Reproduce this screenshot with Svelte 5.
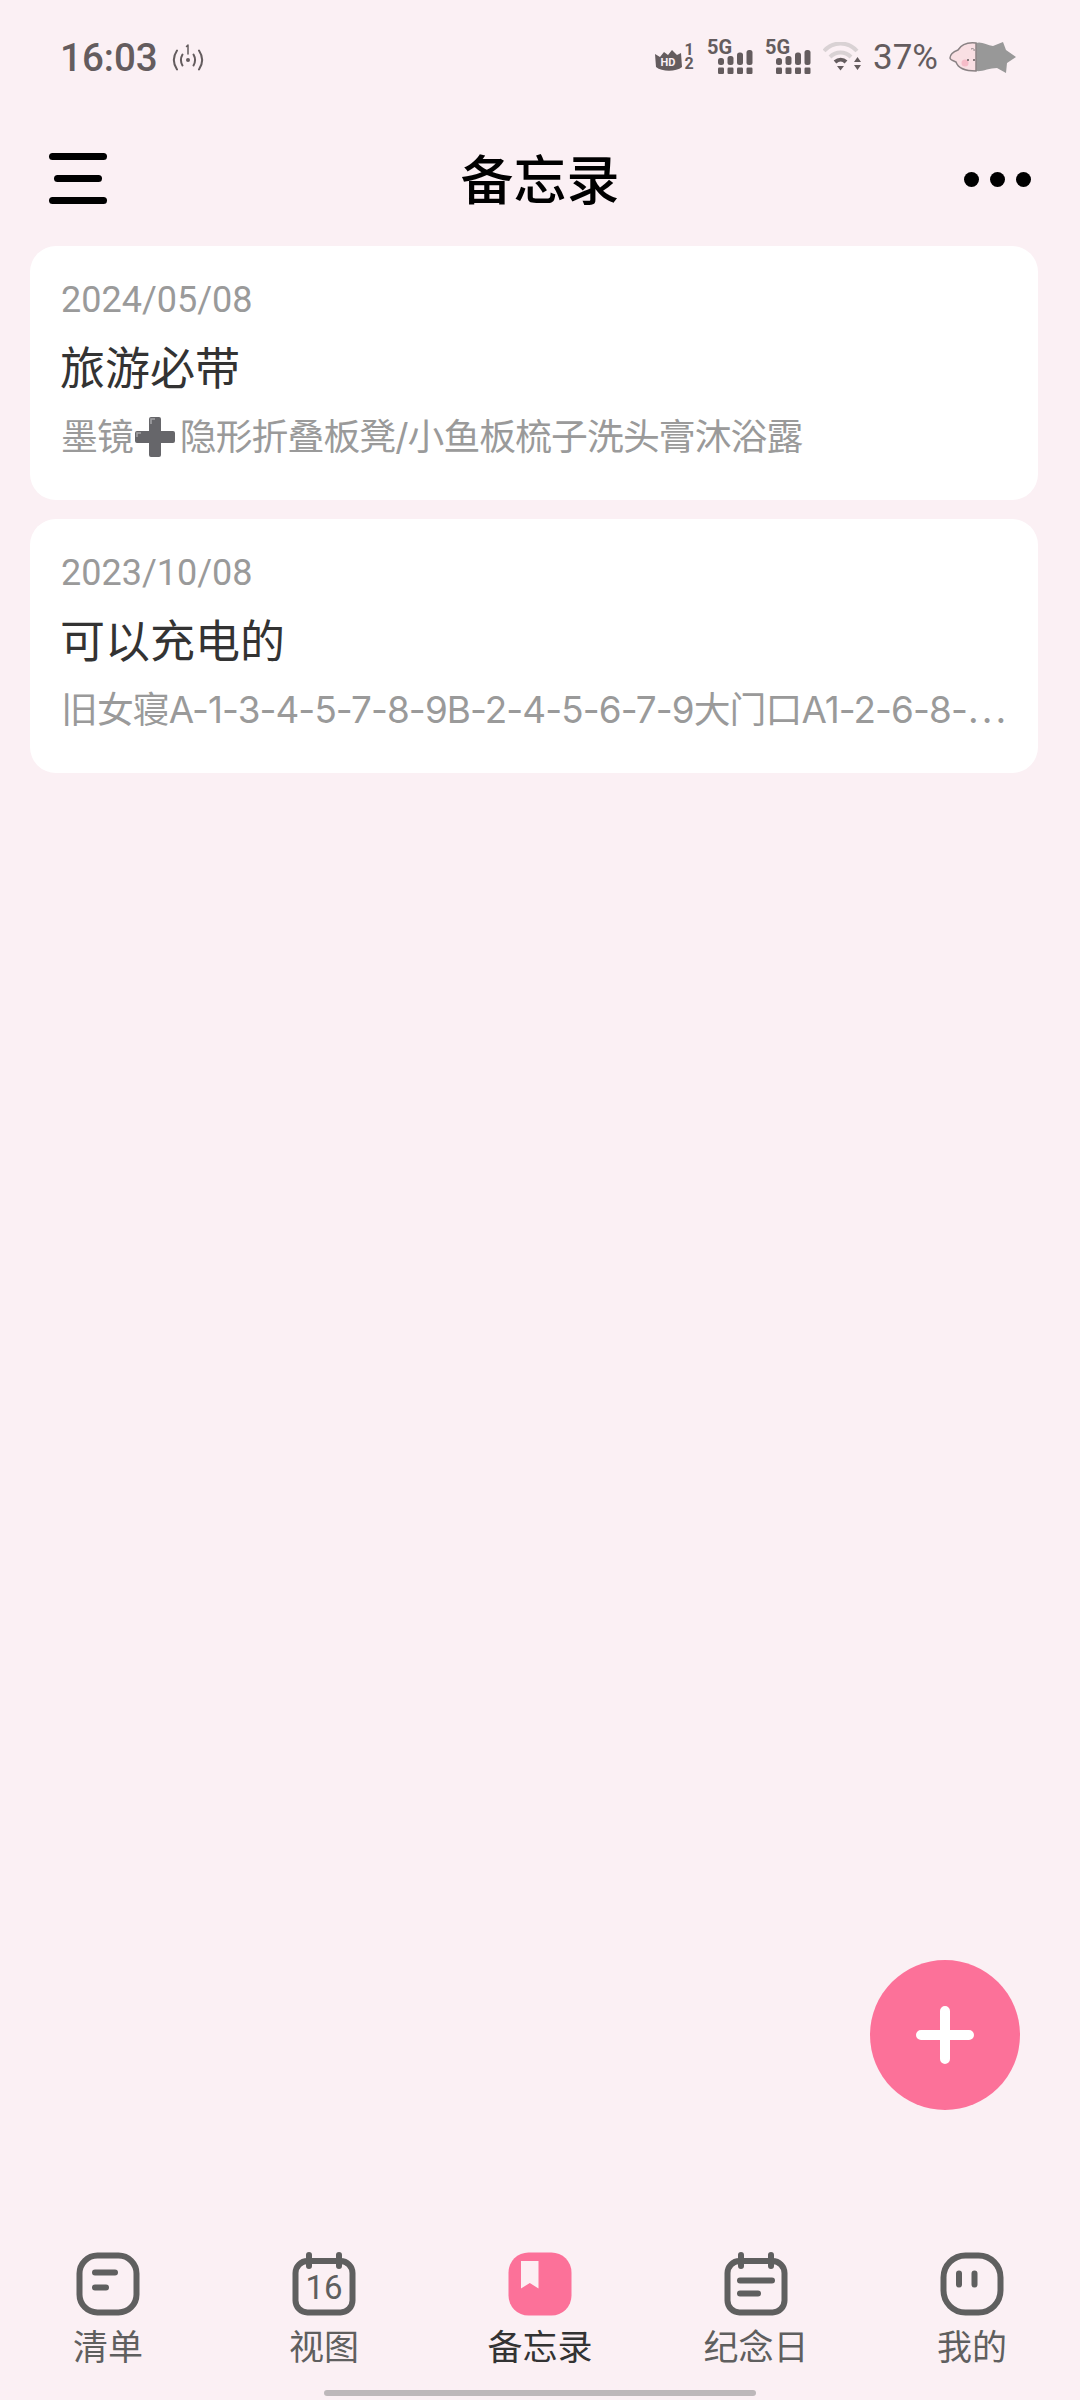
<script>
  const notes = [
    { date: '2024/05/08', title: '旅游必带', before: '墨镜', after: '隐形折叠板凳/小鱼板梳子洗头膏沐浴露' },
    { date: '2023/10/08', title: '可以充电的', before: '旧女寝A-1-3-4-5-7-8-9B-2-4-5-6-7-9大门口A1-2-6-8-⋯' }
  ];

  const tabs = [
    { key: 'list', label: '清单' },
    { key: 'view', label: '视图' },
    { key: 'memo', label: '备忘录', active: true },
    { key: 'days', label: '纪念日' },
    { key: 'mine', label: '我的' }
  ];

  const signalBars = [
    { x: 0, top: 8 },
    { x: 9.5, top: 6 },
    { x: 19, top: 2.5 },
    { x: 28.5, top: 0 }
  ];
</script>

{#snippet signal()}
  <svg class="sig" width="46" height="50" viewBox="0 -8 46 50">
    <text class="five-g" x="0" y="14">5G</text>
    <g transform="translate(11 10)">
      {#each signalBars as bar}
        <rect x={bar.x} y={bar.top} width="6" height={15 - bar.top} rx="2.500" />
        <rect x={bar.x} y="17.500" width="6" height="6.500" rx="1.200" />
      {/each}
    </g>
  </svg>
{/snippet}

<div class="page">
  <header class="status">
    <div class="status-left">
      <span class="time">16:03</span>
      <svg width="32" height="28" viewBox="0 0 32 28" fill="none" stroke="#645c5e" stroke-width="2" stroke-linecap="round">
        <circle cx="16" cy="17" r="2" fill="#645c5e" stroke="none" />
        <path d="M16 2l-1.500 1.500M16 2v9" stroke-width="1.500" />
        <path d="M10.500 11.500c-2 3.500-2 7.500 0 11" />
        <path d="M21.500 11.500c2 3.500 2 7.500 0 11" />
        <path d="M5 7.500c-4 6-4 13 0 19" />
        <path d="M27 7.500c4 6 4 13 0 19" />
      </svg>
    </div>
    <div class="status-right">
      <svg width="40" height="44" viewBox="0 -8 40 44">
        <path class="ink" d="M0 11l5 3 4-5 4 3 4-5 5 5 4-2 1 14c-6 5-20 5-26 0z" />
        <text class="hd" x="13" y="23">HD</text>
        <text class="sim" x="34" y="12">1</text>
        <text class="sim" x="34" y="26">2</text>
      </svg>
      {@render signal()}
      {@render signal()}
      <svg width="38" height="30" viewBox="0 0 38 30" fill="none" stroke-width="4">
        <path d="M1 9C10-1 25-1 34 9" stroke="#d9d2d4" />
        <path d="M7 15c6-6 15-6 21 0" stroke="#d9d2d4" />
        <path d="M12 20c3.500-3 8-3 11 0" stroke="#645c5e" />
        <path class="ink" d="M14 24h7l-3.500 4.500zM34.500 15l3.500 5h-7zM31 23h7l-3.500 5z" />
      </svg>
      <span class="battery">37%</span>
      <svg width="68" height="31" viewBox="0 0 68 31">
        <path d="M27 1C32-1 38 3 44 4L54 0l3 8 10 7-9 6-1 10-9-5c-8 0-15 4-21 3z" fill="#989898" />
        <path d="M27 1C18 0 12 3 9 8 4 10 1 13 1 16c0 2 4 3 6 4 2 6 9 9 20 9z" fill="#f9dfe3" stroke="#8a8284" stroke-width="1.500" />
        <circle cx="16" cy="21" r="3.500" fill="#f6bcc8" />
        <circle cx="19" cy="18" r="1" fill="#645c5e" />
        <circle cx="25" cy="18" r="1" fill="#645c5e" />
        <path d="M22 7c2-1 4 0 3 2" fill="none" stroke="#8a8284" />
      </svg>
    </div>
  </header>

  <div class="toolbar">
    <div class="menu">
      <span></span>
      <span class="short"></span>
      <span></span>
    </div>
    <h1>备忘录</h1>
    <div class="more">
      <span></span><span></span><span></span>
    </div>
  </div>

  <main class="notes">
    {#each notes as note}
      <article class="card">
        <div class="date">{note.date}</div>
        <div class="title">{note.title}</div>
        <div class="preview">
          {note.before}{#if note.after}<svg class="plus-emoji" width="40" height="42" viewBox="0 0 40 42">
              <path d="M14 3a2 2 0 0 1 2-2h8a2 2 0 0 1 2 2v12h12a2 2 0 0 1 2 2v8a2 2 0 0 1-2 2H26v12a2 2 0 0 1-2 2h-8a2 2 0 0 1-2-2V27H2a2 2 0 0 1-2-2v-8a2 2 0 0 1 2-2h12z" fill="#66666a" />
              <path d="M16 8V3h4M2 21v-4h4" fill="none" stroke="#a5a5a8" stroke-width="1.500" />
            </svg>{note.after}{/if}
        </div>
      </article>
    {/each}
  </main>

  <button class="fab" aria-label="新建">
    <svg width="58" height="58" viewBox="0 0 58 58" stroke="#fff" stroke-width="10" stroke-linecap="round">
      <path d="M29 5v48M5 29h48" />
    </svg>
  </button>

  <nav class="tabs">
    {#each tabs as tab}
      <div class="tab" class:active={tab.active}>
        <svg width="64" height="64" viewBox="0 0 64 64" fill="none" stroke="#5f5f5f" stroke-width="6" stroke-linecap="round">
          {#if tab.key === 'list'}
            <rect x="3.500" y="3.500" width="57" height="57" rx="18" />
            <path d="M19 20.500h20M19 35.500h11" />
          {:else if tab.key === 'view'}
            <rect x="3.500" y="9" width="57" height="51.500" rx="12" />
            <path d="M17 3v11M47 3v11" />
            <text class="day" x="32" y="47">16</text>
          {:else if tab.key === 'memo'}
            <rect x="0.500" y="0.500" width="63" height="63" rx="20" fill="#fc7199" stroke="none" />
            <path d="M13 9h17.500v27.500l-8.700-5.500-8.800 5.500z" fill="#fdeef3" stroke="none" />
          {:else if tab.key === 'days'}
            <rect x="3.500" y="9" width="57" height="51.500" rx="12" />
            <path d="M17 3v11M47 3v11M16 28.500h32M16 41.500h18" />
          {:else}
            <rect x="3.500" y="3.500" width="57" height="57" rx="22" />
            <path d="M19 21.500v11M34.500 21.500v11" />
          {/if}
        </svg>
        <span>{tab.label}</span>
      </div>
    {/each}
  </nav>
  <div class="home-bar"></div>
</div>

<style>
  :global(body) {
    margin: 0;
    background: #fbf0f4;
  }

  .page {
    position: relative;
    display: flex;
    flex-direction: column;
    height: 2400px;
    background: #fbf0f4;
    font-family: Roboto, 'Noto Sans CJK SC', sans-serif;
    overflow: hidden;
  }

  .status {
    display: flex;
    align-items: center;
    justify-content: space-between;
    height: 114px;
    padding: 0 63px 0 60px;
    box-sizing: border-box;
    color: #645c5e;
  }

  .status-left,
  .status-right {
    display: flex;
    align-items: center;
  }

  .status-left {
    gap: 14px;
  }

  .status-right {
    gap: 12px;
  }

  .time {
    font-size: 38.5px;
    font-weight: 500;
  }

  .battery {
    font-size: 35px;
    width: 64px;
  }

  .five-g {
    font-size: 20px;
    font-weight: 700;
    fill: #645c5e;
  }

  .sig rect,
  .ink {
    fill: #645c5e;
  }

  .hd {
    font-size: 11px;
    font-weight: 700;
    fill: #fbf0f4;
    text-anchor: middle;
  }

  .sim {
    font-size: 16px;
    font-weight: 700;
    fill: #645c5e;
    text-anchor: middle;
  }

  .toolbar {
    display: grid;
    grid-template-columns: 1fr auto 1fr;
    align-items: center;
    height: 128px;
    padding: 0 49px;
  }

  h1 {
    margin: 8px 0 0;
    font-size: 53px;
    font-weight: 500;
    color: #000;
    line-height: 70px;
  }

  .menu {
    display: flex;
    flex-direction: column;
    align-items: center;
    gap: 15px;
    width: 58px;
  }

  .menu span {
    width: 58px;
    height: 7px;
    border-radius: 4px;
    background: #000;
  }

  .menu .short {
    width: 48px;
  }

  .more {
    display: flex;
    justify-self: end;
    gap: 11px;
    margin-top: 3px;
  }

  .more span {
    width: 15px;
    height: 15px;
    border-radius: 50%;
    background: #000;
  }

  .notes {
    flex: 1;
    display: flex;
    flex-direction: column;
    gap: 19px;
    padding: 4px 42px 0 30px;
  }

  .card {
    height: 254px;
    box-sizing: border-box;
    padding: 31px 14px 0 31px;
    background: #fff;
    border-radius: 26px;
  }

  .date {
    font-size: 36px;
    line-height: 46px;
    margin-bottom: 17px;
    color: #9a9a9a;
  }

  .title {
    font-size: 45px;
    line-height: 60px;
    margin-bottom: 12px;
    margin-left: -1px;
    color: #333;
  }

  .preview {
    font-family: Inter, 'Noto Sans CJK SC', sans-serif;
    font-size: 36.8px;
    letter-spacing: -0.9px;
    line-height: 50px;
    color: #9a9a9a;
    white-space: nowrap;
    overflow: hidden;
  }

  .plus-emoji {
    vertical-align: -8px;
    margin: 0 5px 0 2px;
  }

  .fab {
    position: absolute;
    left: 870px;
    top: 1960px;
    display: flex;
    align-items: center;
    justify-content: center;
    width: 150px;
    height: 150px;
    padding: 0;
    border: none;
    border-radius: 50%;
    background: #fc7199;
  }

  .tabs {
    display: grid;
    grid-template-columns: repeat(5, 1fr);
  }

  .tab {
    display: flex;
    flex-direction: column;
    align-items: center;
    gap: 9px;
    font-size: 35px;
    line-height: 48px;
    color: #5f5f5f;
  }

  .tab.active {
    color: #333;
  }

  .day {
    font-size: 33px;
    font-weight: 400;
    fill: #5f5f5f;
    stroke: none;
    text-anchor: middle;
  }

  .home-bar {
    align-self: center;
    width: 432px;
    height: 6px;
    margin: 17px 0 4px;
    border-radius: 3px;
    background: #bdb8ba;
  }
</style>
